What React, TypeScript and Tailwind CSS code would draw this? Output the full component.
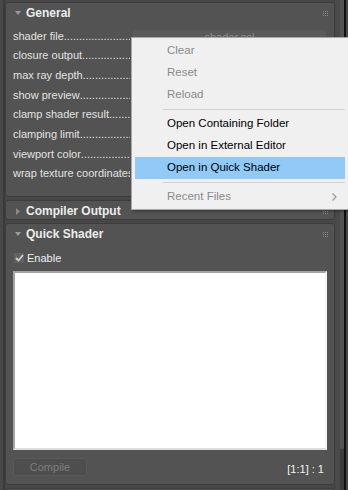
import React from "react";

const font = { fontFamily: '"Liberation Sans", Arial, sans-serif' };

function Grip() {
  return (
    <div className="grid grid-cols-3 gap-[1px] w-[5px]">
      {Array.from({ length: 9 }).map((_, i) => (
        <div key={i} className="w-[1px] h-[1px] bg-[#8c8c8c]" />
      ))}
    </div>
  );
}

function Header({ title, open }: { title: string; open: boolean }) {
  return (
    <div className="flex items-center h-[20px] shrink-0 pl-[6px] pr-[6px]">
      <div className="w-[12px] flex justify-center">
        {open ? (
          <svg width="6" height="4" viewBox="0 0 6 4">
            <path d="M0 0 L6 0 L3 4 Z" fill="#9a9a9a" />
          </svg>
        ) : (
          <svg width="4" height="7" viewBox="0 0 4 7">
            <path d="M0 0 L4 3.5 L0 7 Z" fill="#8a8a8a" />
          </svg>
        )}
      </div>
      <div className="ml-[2px] text-[12px] font-bold text-[#ececec] flex-1">{title}</div>
      <Grip />
    </div>
  );
}

const labels = [
  "shader file",
  "closure output",
  "max ray depth",
  "show preview",
  "clamp shader result",
  "clamping limit",
  "viewport color",
  "wrap texture coordinates",
];

function Row({ label, first }: { label: string; first: boolean }) {
  return (
    <div className="flex items-center h-[19.7px] shrink-0">
      <div className="w-[117px] flex overflow-hidden whitespace-nowrap text-[11px] text-[#e2e2e2]">
        <span className="shrink-0">{label}</span>
        <span className="overflow-hidden">{".".repeat(60)}</span>
      </div>
      {first && (
        <div className="ml-[3px] w-[193px] h-[15px] mt-[3px] rounded-[3px] bg-[#5a5a5a] flex justify-center items-center text-[11px] text-[#8e8e8e]">
          shader.osl
        </div>
      )}
    </div>
  );
}

function MenuItem({ text, disabled, active }: { text: string; disabled?: boolean; active?: boolean }) {
  return (
    <div
      className={
        "h-[22px] mx-[3px] flex items-center pl-[32px] text-[11.5px] " +
        (active ? "bg-[#91c9f7] text-black " : "") +
        (disabled ? "text-[#8a8a8a]" : "text-[#000000]")
      }
    >
      {text}
    </div>
  );
}

function Sep() {
  return <div className="h-[7px] flex items-center ml-[31px] mr-[3px]"><div className="w-full h-[1px] bg-[#d2d2d2]" /></div>;
}

export default function App() {
  return (
    <div className="relative w-[348px] h-[490px] overflow-hidden bg-[#474747] flex" style={font}>
      <div className="w-[5px] flex shrink-0">
        <div className="w-[3px] bg-[#484848]" />
        <div className="w-[2px] bg-[#3a3a3a]" />
      </div>
      <div className="w-[330px] shrink-0 pt-[2px] flex flex-col gap-[3px]">
        <div className="h-[195px] shrink-0 bg-[#535353] rounded-[3px] border border-[#3c3c3c] flex flex-col">
          <Header title="General" open />
          <div className="pl-[7px] pt-[3px] flex flex-col">
            {labels.map((l, i) => (
              <Row key={l} label={l} first={i === 0} />
            ))}
          </div>
        </div>
        <div className="h-[20px] shrink-0 bg-[#535353] rounded-[3px] border border-[#3c3c3c] flex flex-col">
          <Header title="Compiler Output" open={false} />
        </div>
        <div className="h-[262px] shrink-0 bg-[#535353] rounded-[3px] border border-[#3c3c3c] flex flex-col">
          <Header title="Quick Shader" open />
          <div className="flex items-center mt-[8px] ml-[8px] h-[12px]">
            <div className="w-[10px] h-[10px] bg-[#626262] flex items-center justify-center">
              <svg width="9" height="8" viewBox="0 0 9 8">
                <path d="M1 4 L3.5 6.5 L8 1" stroke="#cfcfcf" strokeWidth="1.8" fill="none" />
              </svg>
            </div>
            <span className="ml-[3px] text-[11px] text-[#f0f0f0]">Enable</span>
          </div>
          <div className="mt-[7px] ml-[7px] w-[314px] h-[179px] shrink-0 bg-white border-2 border-t-[#a4a4a4] border-l-[#a4a4a4] border-r-[#f4f4f4] border-b-[#dcdcdc]" />
          <div className="mt-[7px] ml-[7px] mr-[10px] flex items-center justify-between">
            <div className="w-[74px] h-[18px] rounded-[2px] bg-[#4e4e4e] border border-[#5a5a5a] flex items-center justify-center text-[11px] text-[#7e7e7e]">
              Compile
            </div>
            <div className="text-[11px] text-[#f2f2f2] mt-[4px]">[1:1] : 1</div>
          </div>
        </div>
        <div className="h-[20px] shrink-0 bg-[#535353] rounded-[3px] border border-[#3c3c3c]" />
      </div>
      <div className="w-[13px] flex shrink-0">
        <div className="w-[1px] bg-[#474747]" />
        <div className="w-[4px] bg-[#4a4a4a]" />
        <div className="w-[4px] flex flex-col bg-[#3c3c3c]">
          <div className="h-[449px] bg-[#545454] rounded-b-[2px]" />
        </div>
        <div className="w-[2px] bg-[#111111]" />
        <div className="w-[2px] bg-[#4a4a4a]" />
      </div>

      <div className="absolute left-[131px] top-[37px] w-[218px] h-[173px] bg-[#f0f0f0] border border-[#a8a8a8] pt-[2px] shadow-[2px_2px_2px_rgba(0,0,0,0.25)]">
        <MenuItem text="Clear" disabled />
        <MenuItem text="Reset" disabled />
        <MenuItem text="Reload" disabled />
        <Sep />
        <MenuItem text="Open Containing Folder" />
        <MenuItem text="Open in External Editor" />
        <MenuItem text="Open in Quick Shader" active />
        <Sep />
        <div className="relative">
          <MenuItem text="Recent Files" disabled />
          <svg className="absolute left-[200px] top-[7px]" width="5" height="8" viewBox="0 0 5 8">
            <path d="M0.5 0.5 L4 4 L0.5 7.5" stroke="#9a9a9a" strokeWidth="1.2" fill="none" />
          </svg>
        </div>
      </div>
    </div>
  );
}
